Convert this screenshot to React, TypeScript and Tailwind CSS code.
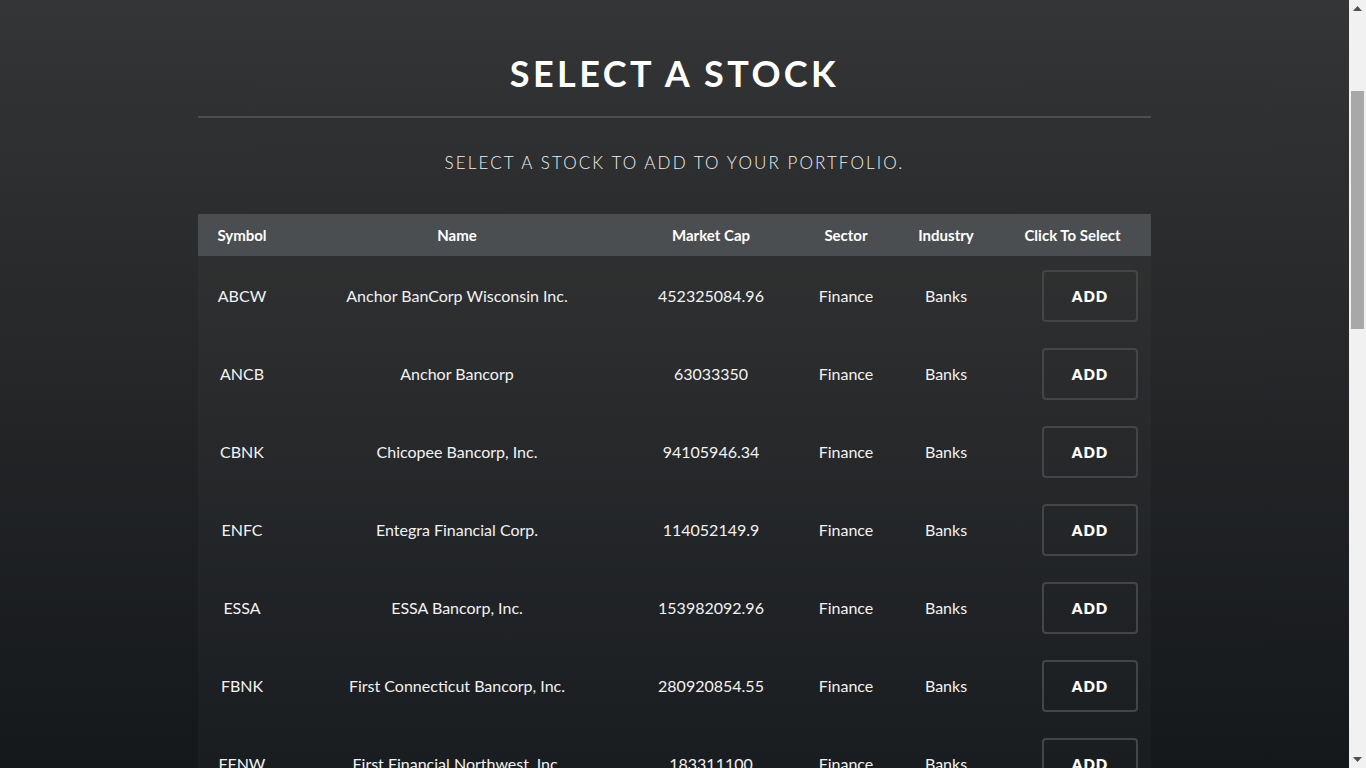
const stocks = [
  ["ABCW", "Anchor BanCorp Wisconsin Inc.", "452325084.96"],
  ["ANCB", "Anchor Bancorp", "63033350"],
  ["CBNK", "Chicopee Bancorp, Inc.", "94105946.34"],
  ["ENFC", "Entegra Financial Corp.", "114052149.9"],
  ["ESSA", "ESSA Bancorp, Inc.", "153982092.96"],
  ["FBNK", "First Connecticut Bancorp, Inc.", "280920854.55"],
  ["FFNW", "First Financial Northwest, Inc.", "183311100"],
  ["FSBW", "FS Bancorp, Inc.", "87712345.6"],
  ["HMNF", "HMN Financial, Inc.", "58123410.25"],
  ["HFBL", "Home Federal Savings Bank of Louisiana", "47251890"],
  ["IROQ", "IF Bancorp, Inc.", "72431188.8"],
  ["LSBK", "Lake Shore Bancorp, Inc.", "81250331.12"],
  ["MSBF", "MSB Financial Corp.", "68013245"],
  ["NWBI", "Northwest Bancshares, Inc.", "1214309920.5"],
  ["OCFC", "OceanFirst Financial Corp.", "329814511.2"],
  ["PBIP", "Prudential Bancorp, Inc.", "111324590"],
  ["PCSB", "PCSB Financial Corporation", "275300120.44"],
  ["PVBC", "Provident Bancorp, Inc.", "149872213"],
  ["SVBI", "Severn Bancorp, Inc.", "64120338.1"],
  ["TSBK", "Timberland Bancorp, Inc.", "142890512.72"],
  ["UCFC", "United Community Financial Corp.", "301215980"],
  ["WAFD", "Washington Federal, Inc.", "2184320116.4"],
  ["WSFS", "WSFS Financial Corporation", "1103222089.9"],
  ["WVFC", "WVS Financial Corp.", "22891004"],
  ["CZWI", "Citizens Community Bancorp, Inc.", "48330712.5"],
];

const font = { fontFamily: '"Lato", "Open Sans", sans-serif' };

// stand-in for the classic browser scrollbar seen in the screenshot
function ScrollStrip() {
  return (
    <div className="flex w-[17px] shrink-0 flex-col items-center bg-[#f1f1f1]">
      <div className="flex h-[17px] items-center justify-center">
        <svg width="9" height="5" viewBox="0 0 9 5">
          <path d="M4.5 0L9 5H0z" fill="#505050" />
        </svg>
      </div>
      <div className="mt-[74px] h-[238px] w-[13px] bg-[#a8a8a8]" />
      <div className="flex-1" />
      <div className="flex h-[17px] items-center justify-center">
        <svg width="9" height="5" viewBox="0 0 9 5">
          <path d="M0 0H9L4.5 5z" fill="#505050" />
        </svg>
      </div>
    </div>
  );
}

export default function App() {
  return (
    <div className="flex h-screen bg-linear-to-b from-[#343536] to-[#15181b] text-white">
      <div className="flex-1 overflow-y-auto">
        <div className="mx-auto w-[953px] pb-16">
          <h1
            className="pt-[50px] pb-[20px] text-center text-[36px] font-bold leading-[46px] tracking-[3.4px] text-white"
            style={font}
          >
            SELECT A STOCK
          </h1>
          <div className="h-[2px] bg-[#4c4d4f]" />
          <p
            className="pt-[33px] pb-[39px] text-center text-[17px] font-light leading-[24px] tracking-[2.1px] text-[#f0f0f0]"
            style={font}
          >
            SELECT A STOCK TO ADD TO YOUR PORTFOLIO.
          </p>

          <table className="w-full table-fixed border-collapse text-[16px]" style={font}>
            <thead>
              <tr className="h-[42px] bg-[#4b4e50] text-[15px] font-bold">
                <th className="w-[88px] text-center">Symbol</th>
                <th className="w-[342px] text-center">Name</th>
                <th className="w-[166px] text-center">Market Cap</th>
                <th className="w-[104px] text-center">Sector</th>
                <th className="w-[96px] text-center">Industry</th>
                <th className="text-center">Click To Select</th>
              </tr>
            </thead>
            <tbody className="bg-white/[0.025]">
              {stocks.map(([sym, name, cap]) => (
                <tr key={sym} className="h-[78px] text-[#f2f2f2]">
                  <td className="pt-px text-center">{sym}</td>
                  <td className="pt-px text-center">{name}</td>
                  <td className="pt-px text-center">{cap}</td>
                  <td className="pt-px text-center">Finance</td>
                  <td className="pt-px text-center">Banks</td>
                  <td className="pt-[2px]">
                    <div className="flex justify-end pr-[13px]">
                      <button className="h-[52px] w-[96px] rounded-[4px] border-2 border-[#434547] text-[15px] font-extrabold tracking-[1px] text-white">
                        ADD
                      </button>
                    </div>
                  </td>
                </tr>
              ))}
            </tbody>
          </table>
        </div>
      </div>
      <ScrollStrip />
    </div>
  );
}
